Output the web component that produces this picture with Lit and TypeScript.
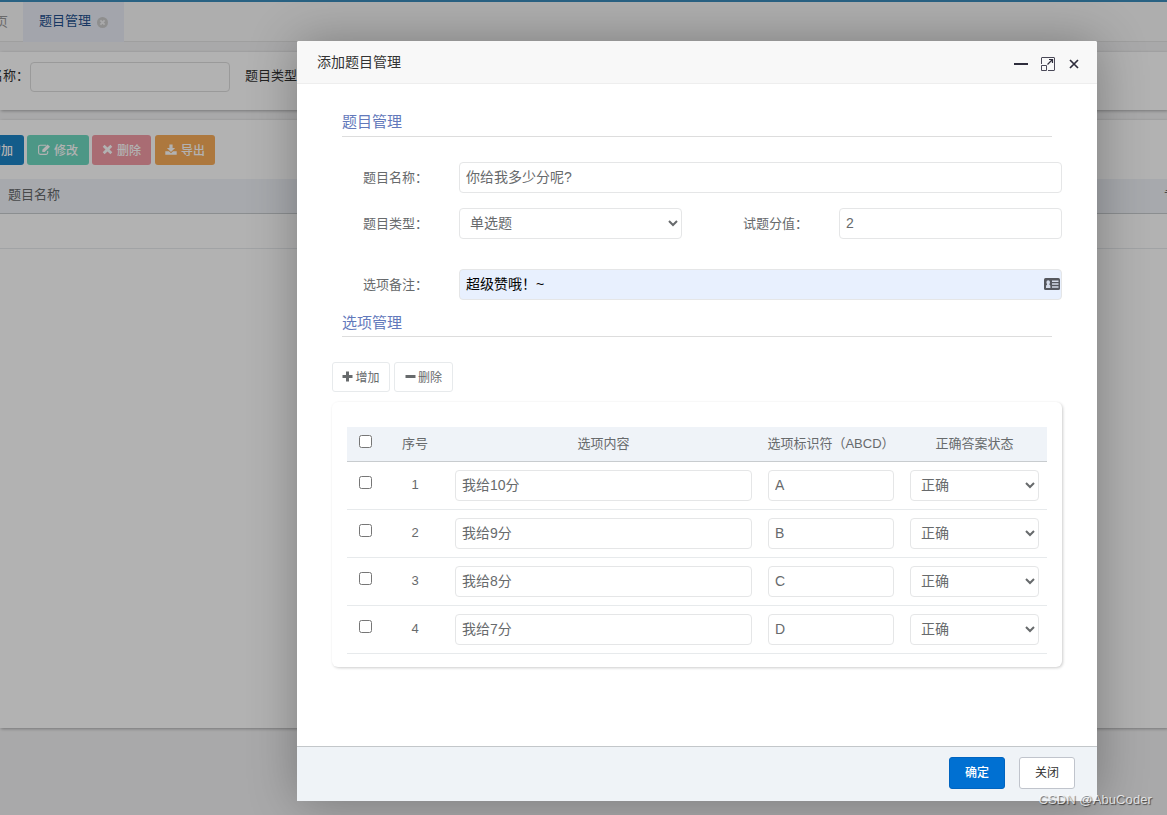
import { html, css, svg, LitElement } from "lit";
import { customElement, property } from "lit/decorators.js";

interface Option {
  content: string;
  mark: string;
}

const OPTIONS: Option[] = [
  { content: "我给10分", mark: "A" },
  { content: "我给9分", mark: "B" },
  { content: "我给8分", mark: "C" },
  { content: "我给7分", mark: "D" },
];

// Font Awesome style glyphs on their own grids
const icons = {
  plus: svg`<path d="M4 0.5h3v3.5h3.5v3H7v3.5H4V7H0.5V4H4z" />`,
  minus: svg`<path d="M0.5 4h10v3h-10z" />`,
  times: svg`<path d="M2.6 0.8 5.5 3.6 8.4 0.8 10.3 2.7 7.5 5.5 10.3 8.3 8.4 10.2 5.5 7.4 2.6 10.2 0.7 8.3 3.5 5.5 0.7 2.7z" />`,
  edit: svg`<path d="M8.2 1.3H2.3Q0.6 1.3 0.6 3v5.8Q0.6 10.4 2.3 10.4h5.8Q9.7 10.4 9.7 8.8V7" fill="none" stroke="currentColor" stroke-width="1.1" /><path d="M9.6 0.4 12 2.8 6.7 8H4.3V5.7z" />`,
  download: svg`<path d="M4.4 0.4h3.2v3.6h2.5L6 8 1.9 4h2.5z" /><path d="M0.3 7.3h3.6L6 9.3l2.1-2h3.6v3.4H0.3z" />`,
};

@customElement("fa-icon")
export class FaIcon extends LitElement {
  static override styles = css`
    :host {
      display: inline-flex;
    }
    svg {
      fill: currentColor;
    }
  `;

  @property() name: keyof typeof icons = "plus";

  override render() {
    const width = this.name === "edit" || this.name === "download" ? 12 : 11;
    return html`<svg width=${width} height="11" viewBox="0 0 ${width} 11">
      ${icons[this.name]}
    </svg>`;
  }
}

@customElement("question-list")
export class QuestionList extends LitElement {
  static override styles = css`
    :host {
      display: flex;
      flex-direction: column;
      height: 100%;
      overflow: hidden;
      background: #f3f3f4;
      border-top: 2px solid #3c8dbc;
      box-sizing: border-box;
    }
    * {
      box-sizing: border-box;
    }
    .tabs {
      display: flex;
      flex: none;
      height: 40px;
      background: #fafafa;
      border-bottom: 1px solid #e4e4e4;
    }
    .tab {
      display: flex;
      align-items: center;
      height: 40px;
      color: #999;
      line-height: 20px;
    }
    .tab-home {
      justify-content: flex-end;
      width: 23px;
      padding: 0 15px 1px 0;
      overflow: hidden;
      white-space: nowrap;
    }
    .tab-active {
      width: 101px;
      padding-left: 16px;
      gap: 6px;
      background: #eaedf6;
      color: #23508e;
    }
    .tab-active span {
      padding-bottom: 2px;
    }
    .panel {
      background: #fff;
      box-shadow: 1px 1px 3px rgba(0, 0, 0, 0.3);
    }
    .search {
      display: flex;
      flex: none;
      align-items: flex-start;
      height: 58px;
      margin-top: 10px;
      padding-top: 10px;
      color: #333;
    }
    .search-label {
      display: flex;
      justify-content: flex-end;
      width: 30px;
      padding-right: 1px;
      overflow: hidden;
      white-space: nowrap;
      line-height: 27px;
    }
    .search-input {
      width: 200px;
      height: 30px;
      margin-right: 15px;
      border: 1px solid #ddd;
      border-radius: 4px;
      background: transparent;
    }
    .search-type {
      line-height: 27px;
    }
    .list {
      flex: none;
      height: 608px;
      margin-top: 10px;
      padding-top: 15px;
    }
    .toolbar {
      display: flex;
      height: 30px;
    }
    .btn {
      display: flex;
      align-items: center;
      justify-content: center;
      gap: 4px;
      height: 30px;
      padding-bottom: 2px;
      border-radius: 3px;
      color: #fff;
      font-size: 12px;
      font-weight: 500;
      white-space: nowrap;
    }
    .btn-add {
      justify-content: flex-end;
      width: 24px;
      padding-right: 11px;
      margin-right: 3px;
      border-radius: 0 3px 3px 0;
      overflow: hidden;
      background: #1c84c6;
    }
    .btn-edit {
      width: 62px;
      margin-right: 3px;
      background: #6fd9c1;
    }
    .btn-remove {
      width: 59px;
      margin-right: 4px;
      background: #f29ba5;
    }
    .btn-export {
      width: 60px;
      background: #f8ac59;
    }
    .head {
      display: flex;
      align-items: center;
      justify-content: space-between;
      height: 35px;
      margin-top: 14px;
      padding: 0 0 5px 8px;
      overflow: hidden;
      background: #eff3f8;
      border-bottom: 1px solid #c8cccf;
      color: #676a6c;
    }
    .head-last {
      width: 3px;
      overflow: hidden;
      white-space: nowrap;
    }
    .row {
      height: 35px;
      border-bottom: 1px solid #e7eaec;
    }
  `;

  override render() {
    return html`
      <div class="tabs">
        <div class="tab tab-home">首页</div>
        <div class="tab tab-active">
          <span>题目管理</span>
          <svg width="11" height="11" viewBox="0 0 11 11">
            <circle cx="5.5" cy="5.5" r="5.5" fill="#ccc" />
            <path d="M3.4 3.4l4.2 4.2M7.6 3.4L3.4 7.6" stroke="#f2f2f4" stroke-width="1.8" />
          </svg>
        </div>
      </div>
      <div class="panel search">
        <div class="search-label">题目名称：</div>
        <input class="search-input" />
        <div class="search-type">题目类型：</div>
      </div>
      <div class="panel list">
        <div class="toolbar">
          <div class="btn btn-add">增加</div>
          <div class="btn btn-edit"><fa-icon name="edit"></fa-icon>修改</div>
          <div class="btn btn-remove"><fa-icon name="times"></fa-icon>删除</div>
          <div class="btn btn-export"><fa-icon name="download"></fa-icon>导出</div>
        </div>
        <div class="head">
          <span>题目名称</span>
          <span class="head-last">专</span>
        </div>
        <div class="row"></div>
      </div>
    `;
  }
}

@customElement("question-dialog")
export class QuestionDialog extends LitElement {
  static override styles = css`
    :host {
      display: flex;
      flex-direction: column;
      background: #fff;
      border-radius: 2px;
      box-shadow: 1px 1px 50px rgba(0, 0, 0, 0.3);
      color: #676a6c;
    }
    * {
      box-sizing: border-box;
    }
    .title {
      display: flex;
      align-items: center;
      justify-content: space-between;
      height: 43px;
      padding: 0 17px 2px 20px;
      background: #f8f8f8;
      border-bottom: 1px solid #eee;
      border-radius: 2px 2px 0 0;
      color: #333;
      font-size: 14px;
    }
    .title-actions {
      display: flex;
      align-items: center;
      gap: 13px;
      padding-top: 5px;
    }
    .body {
      flex: 1;
      padding: 26px 35px 0;
    }
    .section {
      height: 27px;
      margin: 0 10px;
      border-bottom: 1px solid #ddd;
      color: #6379bb;
      font-size: 15px;
      line-height: 24px;
    }
    .form {
      display: grid;
      grid-template-columns: 127px 223px 157px 223px;
      row-gap: 15px;
      padding-top: 25px;
    }
    .label {
      padding-left: 31px;
      line-height: 31px;
    }
    .label-second {
      padding-left: 61px;
    }
    .control {
      display: block;
      width: 100%;
      height: 31px;
      margin: 0;
      padding: 0 6px 3px;
      border: 1px solid #e5e6e7;
      border-radius: 4px;
      outline: none;
      background: #fff;
      color: #676a6c;
      font-family: inherit;
      font-size: 14px;
    }
    .latin {
      padding-bottom: 1px;
    }
    select.control {
      padding-bottom: 2px;
    }
    .wide {
      grid-column: 2 / 5;
    }
    .note {
      margin-top: 15px;
    }
    .autofill {
      display: flex;
      align-items: center;
      justify-content: space-between;
      padding: 0 1px 1px 6px;
      background: #e8f0fe;
      color: #000;
    }
    .autofill span {
      padding-bottom: 2px;
    }
    .section-options {
      margin-top: 10px;
      line-height: 25px;
    }
    .toolbar {
      display: flex;
      gap: 4px;
      margin-top: 25px;
    }
    .btn {
      display: flex;
      align-items: center;
      justify-content: center;
      gap: 2px;
      width: 58px;
      height: 30px;
      padding-bottom: 2px;
      border: 1px solid #e7eaec;
      border-radius: 3px;
      font-size: 12px;
    }
    .btn-minus {
      width: 59px;
    }
    .card {
      height: 265px;
      margin-top: 10px;
      padding: 25px 15px 0;
      border-radius: 6px;
      box-shadow: 1px 1px 3px rgba(0, 0, 0, 0.2);
    }
    .row {
      display: grid;
      grid-template-columns: 36px 64px 313px 142px 145px;
      height: 48px;
      border-bottom: 1px solid #e7eaec;
      text-align: center;
    }
    .row-head {
      height: 35px;
      background: #eff3f8;
      border-bottom-color: #c8cccf;
      line-height: 33px;
    }
    .cell {
      padding: 8px 8px 0;
    }
    .check {
      display: block;
      width: 13px;
      height: 13px;
      margin: 14px 0 0 12px;
    }
    .row-head .check {
      margin-top: 8px;
    }
    .index {
      line-height: 46px;
    }
    .footer {
      display: flex;
      justify-content: flex-end;
      gap: 14px;
      height: 55px;
      padding: 10px 22px 0;
      background: #eff3f7;
      border-top: 1px solid #c3c7ca;
    }
    .action {
      width: 56px;
      height: 32px;
      border: 1px solid #c0c4cc;
      border-radius: 3px;
      background: #fff;
      color: #333;
      font-size: 12px;
      line-height: 30px;
      text-align: center;
    }
    .action-ok {
      border-color: #0064c0;
      background: #0070d2;
      color: #fff;
      font-weight: 500;
    }
  `;

  private _renderRow(option: Option, index: number) {
    return html`<div class="row">
      <input class="check" type="checkbox" />
      <div class="index">${index + 1}</div>
      <div class="cell"><input class="control" .value=${option.content} /></div>
      <div class="cell"><input class="control latin" .value=${option.mark} /></div>
      <div class="cell">
        <select class="control">
          <option>正确</option>
        </select>
      </div>
    </div>`;
  }

  override render() {
    return html`
      <div class="title">
        添加题目管理
        <div class="title-actions">
          <svg width="14" height="14" viewBox="0 0 14 14">
            <path d="M0 6h14v2H0z" fill="#2e2d3c" />
          </svg>
          <svg width="14" height="14" viewBox="0 0 14 14" fill="none" stroke="#4a4958">
            <path d="M0.5 7V1Q0.5 0.5 1 0.5H13Q13.5 0.5 13.5 1V13Q13.5 13.5 13 13.5H7" />
            <path d="M0.5 8.5h5v5h-5z" />
            <path d="M6.5 7.5l5-5M8 2.5h3.5V6" stroke="#2e2d3c" stroke-width="1.2" />
          </svg>
          <svg width="12" height="12" viewBox="0 0 12 12">
            <path d="M2 2l8 8M10 2l-8 8" stroke="#2e2d3c" stroke-width="1.7" />
          </svg>
        </div>
      </div>
      <div class="body">
        <div class="section">题目管理</div>
        <div class="form">
          <div class="label">题目名称：</div>
          <input class="control wide" .value=${"你给我多少分呢?"} />
          <div class="label">题目类型：</div>
          <select class="control">
            <option>单选题</option>
          </select>
          <div class="label label-second">试题分值：</div>
          <input class="control latin" .value=${"2"} />
          <div class="label note">选项备注：</div>
          <div class="control wide note autofill">
            <span>超级赞哦！~</span>
            <svg width="16" height="12" viewBox="0 0 16 12">
              <rect width="16" height="12" rx="1.6" fill="#55585f" />
              <path d="M2 10V8.4q0-1.2 1-1.6V6q-.6-.6-.6-1.7Q2.4 2.3 4.2 2.3T6 4.3Q6 5.4 5.4 6v.8q1 .4 1 1.6V10zM8 2.5H14.5V4H8zM8 5.3H14.5v1.5H8zM8 8.2H14.5v1.5H8z" fill="#d5dcea" />
            </svg>
          </div>
        </div>
        <div class="section section-options">选项管理</div>
        <div class="toolbar">
          <div class="btn"><fa-icon name="plus"></fa-icon>增加</div>
          <div class="btn btn-minus"><fa-icon name="minus"></fa-icon>删除</div>
        </div>
        <div class="card">
          <div class="row row-head">
            <input class="check" type="checkbox" />
            <div>序号</div>
            <div>选项内容</div>
            <div>选项标识符（ABCD）</div>
            <div>正确答案状态</div>
          </div>
          ${OPTIONS.map((option, i) => this._renderRow(option, i))}
        </div>
      </div>
      <div class="footer">
        <div class="action action-ok">确定</div>
        <div class="action">关闭</div>
      </div>
    `;
  }
}

@customElement("app-root")
export class AppRoot extends LitElement {
  static override styles = css`
    :host {
      display: block;
      position: relative;
      width: 1167px;
      height: 815px;
      overflow: hidden;
      font-family: "Liberation Sans", "Noto Sans CJK SC", sans-serif;
      font-size: 13px;
    }
    .shade {
      position: absolute;
      inset: 0;
      background: rgba(0, 0, 0, 0.3);
    }
    .dialog {
      position: absolute;
      top: 41px;
      left: 297px;
      width: 800px;
      height: 760px;
    }
    .watermark {
      position: absolute;
      right: 15px;
      bottom: 7px;
      color: rgba(255, 255, 255, 0.75);
      font-size: 13px;
      line-height: 16px;
      letter-spacing: 0.1px;
      text-shadow: 1px 1px 1px rgba(0, 0, 0, 0.6);
    }
  `;

  override render() {
    return html`
      <question-list></question-list>
      <div class="shade"></div>
      <question-dialog class="dialog"></question-dialog>
      <div class="watermark">CSDN @AbuCoder</div>
    `;
  }
}
